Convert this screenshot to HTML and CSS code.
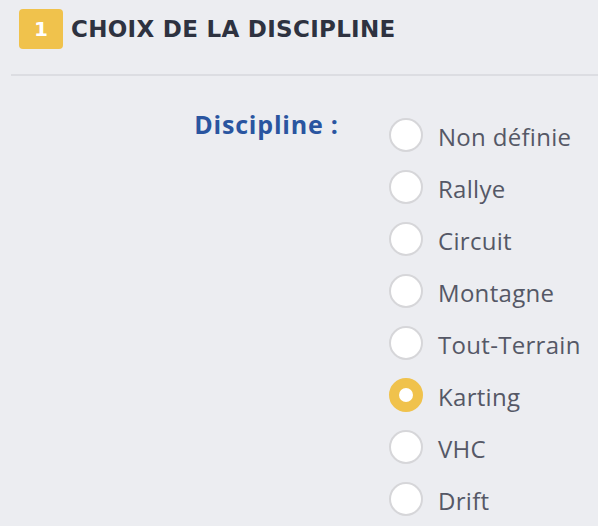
FILE: index.html
```html
<!DOCTYPE html>
<html lang="fr">
<head>
<meta charset="utf-8">
<link rel="stylesheet" href="styles.css">
</head>
<body>
<div class="section-head">
  <span class="badge">1</span>
  <h2 class="title">CHOIX DE LA DISCIPLINE</h2>
</div>
<hr class="divider">
<div class="form-row">
  <div class="label">Discipline :</div>
  <div class="options">
    <label class="opt"><span class="radio"></span><span class="txt">Non définie</span></label>
    <label class="opt"><span class="radio"></span><span class="txt">Rallye</span></label>
    <label class="opt"><span class="radio"></span><span class="txt">Circuit</span></label>
    <label class="opt"><span class="radio"></span><span class="txt">Montagne</span></label>
    <label class="opt"><span class="radio"></span><span class="txt">Tout-Terrain</span></label>
    <label class="opt"><span class="radio checked"></span><span class="txt">Karting</span></label>
    <label class="opt"><span class="radio"></span><span class="txt">VHC</span></label>
    <label class="opt"><span class="radio"></span><span class="txt">Drift</span></label>
  </div>
</div>
</body>
</html>
```
FILE: styles.css
```css
html, body {
  margin: 0;
  padding: 0;
  background: #ecedf1;
}
body {
  width: 598px;
  height: 526px;
  overflow: hidden;
  font-family: "Open Sans", "Liberation Sans", sans-serif;
}
.section-head {
  display: flex;
  align-items: center;
  gap: 8px;
  padding: 9px 0 0 19px;
  height: 40px;
}
.badge {
  width: 44px;
  height: 40px;
  border-radius: 4px;
  background: #f0c24c;
  color: #fff;
  font-family: "DejaVu Sans", sans-serif;
  font-weight: bold;
  font-size: 20px;
  display: flex;
  align-items: center;
  justify-content: center;
}
.title {
  margin: 0;
  font-family: "DejaVu Sans", sans-serif;
  font-weight: bold;
  font-size: 23px;
  color: #2e3240;
  letter-spacing: 0.3px;
}
.divider {
  margin: 25px 0 0 11px;
  border: 0;
  height: 2px;
  background: #dcdde2;
}
.form-row {
  display: grid;
  grid-template-columns: 338px auto;
  column-gap: 51px;
  margin-top: 33px;
}
.label {
  text-align: right;
  font-weight: bold;
  font-size: 25px;
  letter-spacing: 0.8px;
  margin-right: -0.8px;
  color: #2a55a0;
  line-height: 32px;
  margin-top: -1px;
}
.options {
  display: flex;
  flex-direction: column;
}
.opt {
  display: flex;
  align-items: center;
  gap: 15px;
  height: 52px;
}
.radio {
  box-sizing: border-box;
  flex: none;
  width: 34px;
  height: 34px;
  border-radius: 50%;
  background: #fff;
  border: 2px solid #d6d6d9;
  position: relative;
}
.radio.checked {
  background: #f0c24c;
  border-color: #f0c24c;
}
.radio.checked::after {
  content: "";
  position: absolute;
  left: 8px;
  top: 8px;
  width: 14px;
  height: 14px;
  border-radius: 50%;
  background: #fff;
}
.txt {
  font-size: 24px;
  letter-spacing: 0.3px;
  color: #555866;
  margin-top: 2px;
}
```
